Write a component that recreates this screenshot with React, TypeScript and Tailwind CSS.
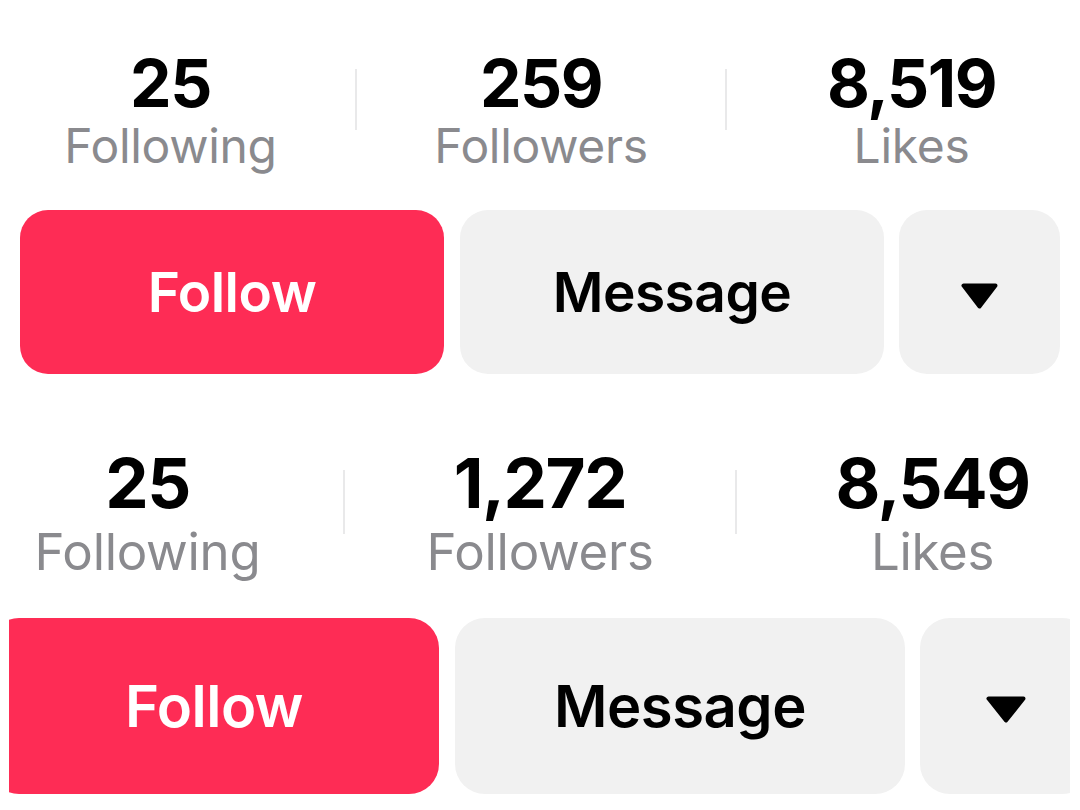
import React from "react";

function Tri({ w, h }: { w: number; h: number }) {
  return (
    <svg width={w} height={h} viewBox={`0 0 ${w} ${h}`}>
      <path
        d={`M2.5 2.5 H${w - 2.5} L${w / 2} ${h - 2.5} Z`}
        fill="#000"
        stroke="#000"
        strokeWidth="4"
        strokeLinejoin="round"
      />
    </svg>
  );
}

export default function App() {
  return (
    <div
      className="w-[1080px] h-[810px] bg-white overflow-hidden pt-[50px]"
      style={{ fontFamily: "Inter, 'Noto Sans', sans-serif" }}
    >
      {/* Panel 1 */}
      <div className="flex ml-[-14px]">
        <div className="shrink-0 w-[369px] flex flex-col items-center">
          <div className="text-[66px] leading-[66px] font-bold text-black tracking-[-1.5px]">25</div>
          <div className="mt-[6px] text-[48px] leading-[48px] text-[#8a8a8e] tracking-[-0.3px]">Following</div>
        </div>
        <div className="shrink-0 w-[2px] h-[61px] mt-[19px] bg-[#e9e9ea]" />
        <div className="shrink-0 w-[368px] flex flex-col items-center">
          <div className="text-[66px] leading-[66px] font-bold text-black tracking-[-1.5px]">259</div>
          <div className="mt-[6px] text-[48px] leading-[48px] text-[#8a8a8e] tracking-[-0.3px]">Followers</div>
        </div>
        <div className="shrink-0 w-[2px] h-[61px] mt-[19px] bg-[#e9e9ea]" />
        <div className="shrink-0 w-[369px] flex flex-col items-center">
          <div className="text-[66px] leading-[66px] font-bold text-black tracking-[-1.5px]">8,519</div>
          <div className="mt-[6px] text-[48px] leading-[48px] text-[#8a8a8e] tracking-[-0.3px]">Likes</div>
        </div>
      </div>
      <div className="flex mt-[40px] ml-[20px] h-[164px]">
        <div className="shrink-0 w-[424px] h-full rounded-[28px] bg-[#fe2c55] flex items-center justify-center text-white text-[55px] font-semibold tracking-[-0.5px]">
          Follow
        </div>
        <div className="shrink-0 ml-[16px] w-[424px] h-full rounded-[28px] bg-[#f1f1f1] flex items-center justify-center text-black text-[55px] font-semibold tracking-[-0.5px]">
          Message
        </div>
        <div className="shrink-0 ml-[15px] w-[161px] h-full rounded-[28px] bg-[#f1f1f1] flex items-center justify-center">
          <div className="mt-[8px]">
            <Tri w={37} h={26} />
          </div>
        </div>
      </div>

      {/* Panel 2 */}
      <div className="flex ml-[-48px] mt-[75px]">
        <div className="shrink-0 w-[391px] flex flex-col items-center">
          <div className="text-[69px] leading-[69px] font-bold text-black tracking-[-1.5px]">25</div>
          <div className="mt-[8px] text-[51px] leading-[51px] text-[#8a8a8e] tracking-[-0.3px]">Following</div>
        </div>
        <div className="shrink-0 w-[2px] h-[64px] mt-[21px] bg-[#e9e9ea]" />
        <div className="shrink-0 w-[390px] flex flex-col items-center">
          <div className="text-[69px] leading-[69px] font-bold text-black tracking-[-1.5px]">1,272</div>
          <div className="mt-[8px] text-[51px] leading-[51px] text-[#8a8a8e] tracking-[-0.3px]">Followers</div>
        </div>
        <div className="shrink-0 w-[2px] h-[64px] mt-[21px] bg-[#e9e9ea]" />
        <div className="shrink-0 w-[391px] flex flex-col items-center">
          <div className="text-[69px] leading-[69px] font-bold text-black tracking-[-1.5px]">8,549</div>
          <div className="mt-[8px] text-[51px] leading-[51px] text-[#8a8a8e] tracking-[-0.3px]">Likes</div>
        </div>
      </div>
      <div className="mt-[41px] ml-[9px] w-[1061px] h-[176px] overflow-hidden">
        <div className="flex ml-[-20px] h-full">
          <div className="shrink-0 w-[450px] h-full rounded-[30px] bg-[#fe2c55] flex items-center justify-center text-white text-[58px] font-semibold tracking-[-0.5px]">
            Follow
          </div>
          <div className="shrink-0 ml-[16px] w-[450px] h-full rounded-[30px] bg-[#f1f1f1] flex items-center justify-center text-black text-[58px] font-semibold tracking-[-0.5px]">
            Message
          </div>
          <div className="shrink-0 ml-[15px] w-[172px] h-full rounded-[30px] bg-[#f1f1f1] flex items-center justify-center">
            <div className="mt-[6px]">
              <Tri w={40} h={27} />
            </div>
          </div>
        </div>
      </div>
    </div>
  );
}
